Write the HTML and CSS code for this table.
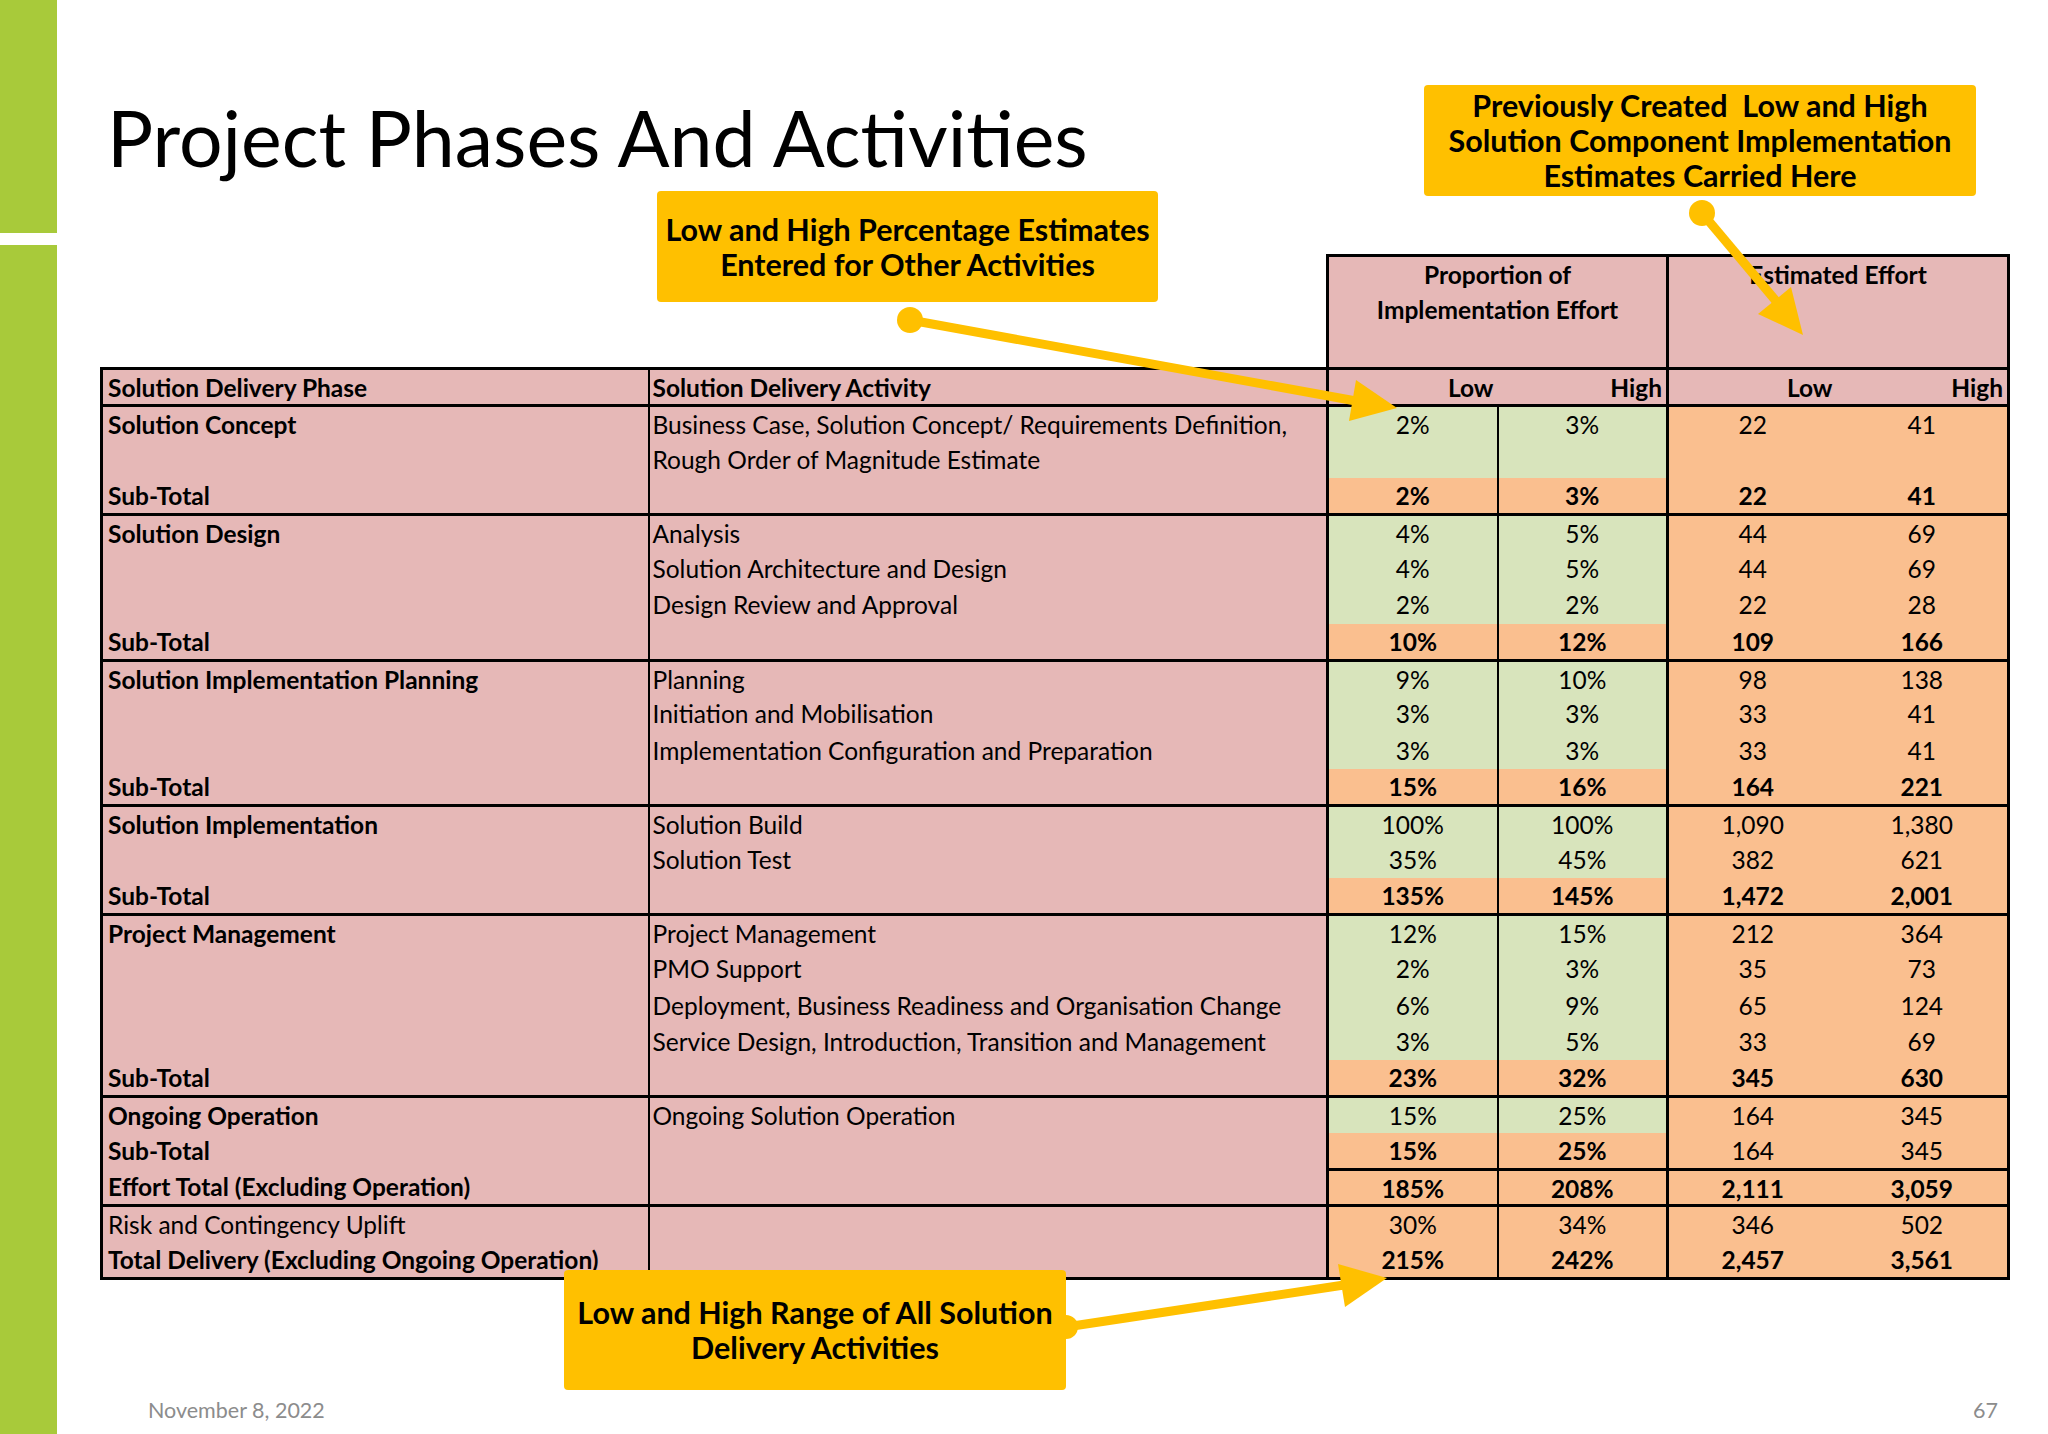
FILE: index.html
```html
<!DOCTYPE html>
<html lang="en">
<head>
<meta charset="utf-8">
<title>Project Phases And Activities</title>
<link rel="stylesheet" href="styles.css">
</head>
<body>
<div class="slide">
  <div class="rail"><div class="rail-top"></div><div class="rail-bottom"></div></div>
  <main class="content">
    <h1 class="title">Project Phases And Activities</h1>
    <table class="est">
      <colgroup>
        <col class="w-ph"><col class="w-act"><col class="w-p"><col class="w-p"><col class="w-e"><col class="w-e2">
      </colgroup>
      <tr class="top">
        <td class="blank" colspan="2"></td>
        <td class="hdr" colspan="2">Proportion of<br>Implementation Effort</td>
        <td class="hdr" colspan="2">Estimated Effort</td>
      </tr>
      <tr class="ln head">
        <td class="ph">Solution Delivery Phase</td>
        <td class="act">Solution Delivery Activity</td>
        <td class="pl r">Low</td>
        <td class="phg r">High</td>
        <td class="el r">Low</td>
        <td class="eh r">High</td>
      </tr>

      <tr class="ln">
        <td class="ph b">Solution Concept</td>
        <td class="act">Business Case, Solution Concept/ Requirements Definition,</td>
        <td class="pl g">2%</td><td class="phg g">3%</td><td class="el">22</td><td class="eh">41</td>
      </tr>
      <tr class="ln">
        <td class="ph"></td>
        <td class="act">Rough Order of Magnitude Estimate</td>
        <td class="pl g"></td><td class="phg g"></td><td class="el"></td><td class="eh"></td>
      </tr>
      <tr class="ln end">
        <td class="ph b">Sub-Total</td><td class="act"></td>
        <td class="pl b">2%</td><td class="phg b">3%</td><td class="el b">22</td><td class="eh b">41</td>
      </tr>

      <tr class="ln">
        <td class="ph b">Solution Design</td><td class="act">Analysis</td>
        <td class="pl g">4%</td><td class="phg g">5%</td><td class="el">44</td><td class="eh">69</td>
      </tr>
      <tr class="ln">
        <td class="ph"></td><td class="act">Solution Architecture and Design</td>
        <td class="pl g">4%</td><td class="phg g">5%</td><td class="el">44</td><td class="eh">69</td>
      </tr>
      <tr class="ln">
        <td class="ph"></td><td class="act">Design Review and Approval</td>
        <td class="pl g">2%</td><td class="phg g">2%</td><td class="el">22</td><td class="eh">28</td>
      </tr>
      <tr class="ln end">
        <td class="ph b">Sub-Total</td><td class="act"></td>
        <td class="pl b">10%</td><td class="phg b">12%</td><td class="el b">109</td><td class="eh b">166</td>
      </tr>

      <tr class="ln">
        <td class="ph b">Solution Implementation Planning</td><td class="act">Planning</td>
        <td class="pl g">9%</td><td class="phg g">10%</td><td class="el">98</td><td class="eh">138</td>
      </tr>
      <tr class="ln">
        <td class="ph"></td><td class="act">Initiation and Mobilisation</td>
        <td class="pl g">3%</td><td class="phg g">3%</td><td class="el">33</td><td class="eh">41</td>
      </tr>
      <tr class="ln">
        <td class="ph"></td><td class="act">Implementation Configuration and Preparation</td>
        <td class="pl g">3%</td><td class="phg g">3%</td><td class="el">33</td><td class="eh">41</td>
      </tr>
      <tr class="ln end">
        <td class="ph b">Sub-Total</td><td class="act"></td>
        <td class="pl b">15%</td><td class="phg b">16%</td><td class="el b">164</td><td class="eh b">221</td>
      </tr>

      <tr class="ln">
        <td class="ph b">Solution Implementation</td><td class="act">Solution Build</td>
        <td class="pl g">100%</td><td class="phg g">100%</td><td class="el">1,090</td><td class="eh">1,380</td>
      </tr>
      <tr class="ln">
        <td class="ph"></td><td class="act">Solution Test</td>
        <td class="pl g">35%</td><td class="phg g">45%</td><td class="el">382</td><td class="eh">621</td>
      </tr>
      <tr class="ln end">
        <td class="ph b">Sub-Total</td><td class="act"></td>
        <td class="pl b">135%</td><td class="phg b">145%</td><td class="el b">1,472</td><td class="eh b">2,001</td>
      </tr>

      <tr class="ln">
        <td class="ph b">Project Management</td><td class="act">Project Management</td>
        <td class="pl g">12%</td><td class="phg g">15%</td><td class="el">212</td><td class="eh">364</td>
      </tr>
      <tr class="ln">
        <td class="ph"></td><td class="act">PMO Support</td>
        <td class="pl g">2%</td><td class="phg g">3%</td><td class="el">35</td><td class="eh">73</td>
      </tr>
      <tr class="ln">
        <td class="ph"></td><td class="act">Deployment, Business Readiness and Organisation Change</td>
        <td class="pl g">6%</td><td class="phg g">9%</td><td class="el">65</td><td class="eh">124</td>
      </tr>
      <tr class="ln">
        <td class="ph"></td><td class="act">Service Design, Introduction, Transition and Management</td>
        <td class="pl g">3%</td><td class="phg g">5%</td><td class="el">33</td><td class="eh">69</td>
      </tr>
      <tr class="ln end">
        <td class="ph b">Sub-Total</td><td class="act"></td>
        <td class="pl b">23%</td><td class="phg b">32%</td><td class="el b">345</td><td class="eh b">630</td>
      </tr>

      <tr class="ln">
        <td class="ph b">Ongoing Operation</td><td class="act">Ongoing Solution Operation</td>
        <td class="pl g">15%</td><td class="phg g">25%</td><td class="el">164</td><td class="eh">345</td>
      </tr>
      <tr class="ln">
        <td class="ph b">Sub-Total</td><td class="act"></td>
        <td class="pl b cut">15%</td><td class="phg b cut">25%</td><td class="el cut">164</td><td class="eh cut">345</td>
      </tr>
      <tr class="ln end">
        <td class="ph b">Effort Total (Excluding Operation)</td><td class="act"></td>
        <td class="pl b">185%</td><td class="phg b">208%</td><td class="el b">2,111</td><td class="eh b">3,059</td>
      </tr>

      <tr class="ln">
        <td class="ph">Risk and Contingency Uplift</td><td class="act"></td>
        <td class="pl">30%</td><td class="phg">34%</td><td class="el">346</td><td class="eh">502</td>
      </tr>
      <tr class="ln end">
        <td class="ph b">Total Delivery (Excluding Ongoing Operation)</td><td class="act"></td>
        <td class="pl b">215%</td><td class="phg b">242%</td><td class="el b">2,457</td><td class="eh b">3,561</td>
      </tr>
    </table>
    <footer class="foot"><span>November 8, 2022</span><span>67</span></footer>
  </main>

  <div class="callout c-pct">Low and High Percentage Estimates<br>Entered for Other Activities</div>
  <div class="callout c-prev">Previously Created&nbsp; Low and High<br>Solution Component Implementation<br>Estimates Carried Here</div>
  <div class="callout c-range">Low and High Range of All Solution<br>Delivery Activities</div>

  <svg class="arrows" viewBox="0 0 2048 1434" width="2048" height="1434" aria-hidden="true">
    <g fill="#FFC000" stroke="#FFC000" stroke-width="9">
      <line x1="910" y1="320" x2="1356" y2="401"/>
      <circle cx="910" cy="320" r="13" stroke="none"/>
      <polygon points="1397,408 1356,380 1349,421" stroke="none"/>

      <line x1="1702" y1="213" x2="1776" y2="301"/>
      <circle cx="1702" cy="213" r="13" stroke="none"/>
      <polygon points="1803,335 1791,287 1758,314" stroke="none"/>

      <line x1="1066" y1="1327" x2="1344" y2="1285"/>
      <circle cx="1066" cy="1327" r="12" stroke="none"/>
      <polygon points="1387,1278 1338,1264 1345,1307" stroke="none"/>
    </g>
  </svg>
</div>
</body>
</html>
```

FILE: styles.css
```css
* { box-sizing: border-box; }

body {
  margin: 0;
  background: #ffffff;
  font-family: Lato, "Open Sans", "Liberation Sans", sans-serif;
  color: #000;
}

.slide {
  position: relative;
  width: 2048px;
  height: 1434px;
  display: flex;
  overflow: hidden;
  background: #fff;
}

/* left green rail */
.rail {
  flex: none;
  width: 57px;
  display: flex;
  flex-direction: column;
  gap: 12px;
}
.rail-top { height: 233px; background: #a8ca3a; }
.rail-bottom { flex: 1; background: #a8ca3a; }

.content {
  flex: 1;
  display: flex;
  flex-direction: column;
}

.title {
  margin: 91px 0 0 50px;
  font-size: 77px;
  font-weight: 400;
  line-height: 1.2;
  letter-spacing: 0;
}

/* table */
.est {
  margin: 71px 0 0 43px;
  width: 1907px;
  table-layout: fixed;
  border-collapse: collapse;
  font-size: 24.5px;
}
.w-ph { width: 547px; }
.w-act { width: 679px; }
.w-p { width: 170px; }
.w-e { width: 169px; }
.w-e2 { width: 172px; }

.est td {
  padding: 3px 4px 0;
  line-height: 30px;
  vertical-align: top;
  white-space: nowrap;
  text-align: center;
  background: #fabf8f;
}

.est tr.top { height: 113px; }
.est tr.ln { height: 36.4px; }

.est td.blank { background: transparent; border: none; }
.est td.hdr {
  border: 3px solid #000;
  background: #e6b8b7;
  font-weight: 700;
  line-height: 35px;
  padding-top: 0;
}

.est td.ph {
  text-align: left;
  padding-left: 5px;
  background: #e6b8b7;
  border-left: 3px solid #000;
  border-right: 2px solid #000;
}
.est td.act {
  text-align: left;
  padding-left: 3px;
  background: #e6b8b7;
  border-right: 3px solid #000;
}
.est td.pl { border-right: 2px solid #000; }
.est td.phg { border-right: 3px solid #000; }
.est td.eh { border-right: 3px solid #000; }

.est td.g { background: #d8e4bc; }
.est td.b { font-weight: 700; }

.est tr.head td {
  background: #e6b8b7;
  font-weight: 700;
  border-top: 3px solid #000;
  border-bottom: 3px solid #000;
}
.est tr.head td.pl { border-right: none; }
.est tr.head td.el { border-right: none; }
.est tr.head td.r { text-align: right; padding-right: 4px; }

.est tr.end td { border-bottom: 3px solid #000; }
.est td.cut { border-bottom: 3px solid #000; }

/* footer */
.foot {
  margin-top: auto;
  display: flex;
  justify-content: space-between;
  padding: 0 50px 11px 91px;
  font-size: 21.5px;
  line-height: 26px;
  color: #8c8c8c;
}

/* callouts (annotations over the slide) */
.callout {
  position: absolute;
  display: flex;
  align-items: center;
  justify-content: center;
  text-align: center;
  background: #ffc000;
  border-radius: 4px;
  font-weight: 700;
  font-size: 30.5px;
  line-height: 35px;
  color: #000;
}
.c-pct { left: 657px; top: 191px; width: 501px; height: 111px; }
.c-prev { left: 1424px; top: 85px; width: 552px; height: 111px; }
.c-range { left: 564px; top: 1270px; width: 502px; height: 120px; }

.arrows {
  position: absolute;
  left: 0;
  top: 0;
  pointer-events: none;
}
```
